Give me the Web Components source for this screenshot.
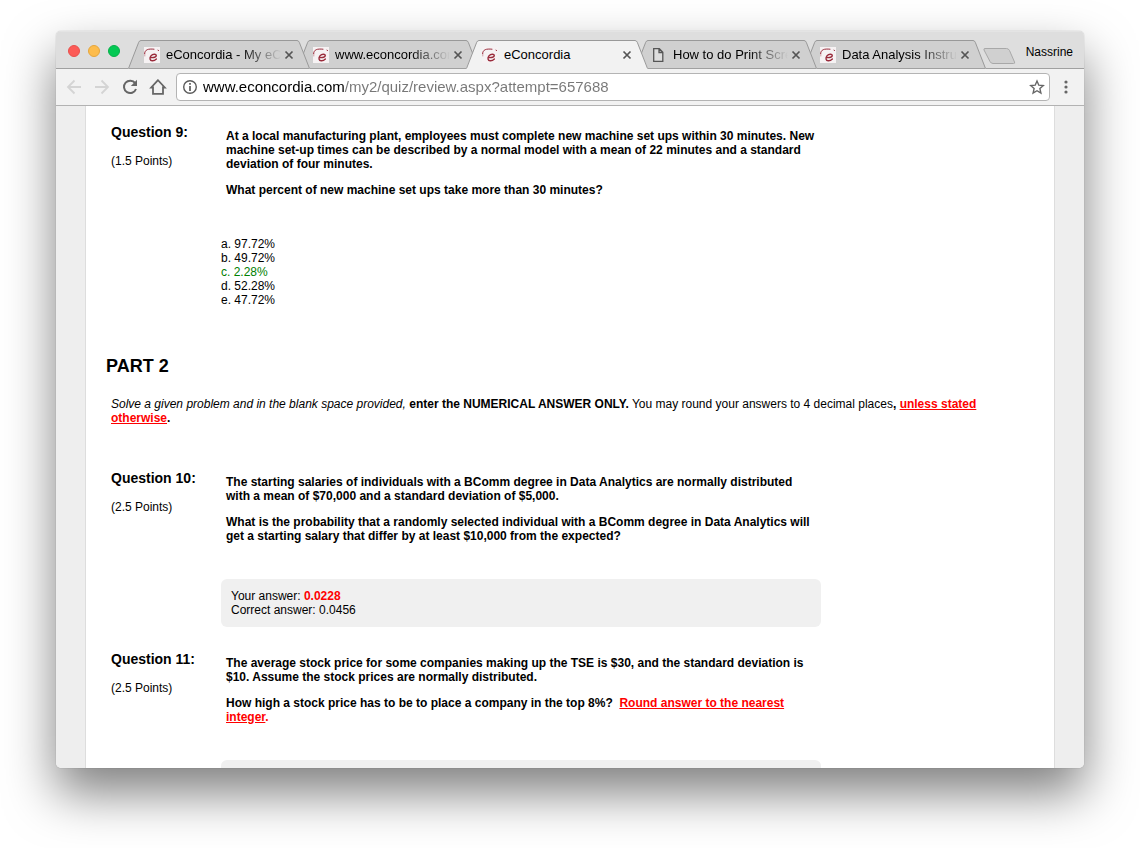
<!DOCTYPE html>
<html lang="en">
<head>
<meta charset="utf-8">
<title>eConcordia</title>
<style>
html, body { height: 100%; margin: 0; }
body { background: #fff; color: #000; font: 12px/14px "Liberation Sans", Arial, sans-serif; }
em { font-style: italic; }
.key { color: #f00; font-weight: bold; }
</style>
</head>
<body>
<browser-window>
  <tab-strip slot="tabs">
    <browser-tab label="eConcordia - My eConcordia" style="z-index:5"></browser-tab>
    <browser-tab label="www.econcordia.com" style="z-index:4"></browser-tab>
    <browser-tab label="eConcordia" active style="z-index:6"></browser-tab>
    <browser-tab label="How to do Print Screen" icon="file" style="z-index:2"></browser-tab>
    <browser-tab label="Data Analysis Instructions" style="z-index:1"></browser-tab>
  </tab-strip>
  <tool-bar slot="tools"></tool-bar>
  <quiz-page>
    <quiz-question name="Question 9:" points="(1.5 Points)">
      <quiz-text>At a local manufacturing plant, employees must complete new machine set ups within 30 minutes. New machine set-up times can be described by a normal model with a mean of 22 minutes and a standard deviation of four minutes.</quiz-text>
      <quiz-text>What percent of new machine set ups take more than 30 minutes?</quiz-text>
      <choice-list slot="answer" correct="2" options="a. 97.72%|b. 49.72%|c. 2.28%|d. 52.28%|e. 47.72%"></choice-list>
    </quiz-question>
    <quiz-part name="PART 2"><em>Solve a given problem and in the blank space provided,</em> <b>enter the NUMERICAL ANSWER ONLY.</b> You may round your answers to 4 decimal places<b>, <u class="key">unless stated otherwise</u>.</b></quiz-part>
    <quiz-question name="Question 10:" points="(2.5 Points)">
      <quiz-text>The starting salaries of individuals with a BComm degree in Data Analytics are normally distributed with a mean of $70,000 and a standard deviation of $5,000.</quiz-text>
      <quiz-text>What is the probability that a randomly selected individual with a BComm degree in Data Analytics will get a starting salary that differ by at least $10,000 from the expected?</quiz-text>
      <answer-box slot="answer"><div>Your answer: <span class="key">0.0228</span></div><div>Correct answer: 0.0456</div></answer-box>
    </quiz-question>
    <quiz-question name="Question 11:" points="(2.5 Points)">
      <quiz-text>The average stock price for some companies making up the TSE is $30, and the standard deviation is $10. Assume the stock prices are normally distributed.</quiz-text>
      <quiz-text>How high a stock price has to be to place a company in the top 8%?&nbsp; <span class="key"><u>Round answer to the nearest integer</u>.</span></quiz-text>
      <answer-box slot="answer"></answer-box>
    </quiz-question>
  </quiz-page>
</browser-window>

<script>
const define = (name, html, setup) => customElements.define(name, class extends HTMLElement {
  connectedCallback() {
    if (this.shadowRoot) return;
    const root = this.attachShadow({ mode: "open" });
    const t = document.createElement("template");
    t.innerHTML = html;
    root.append(t.content.cloneNode(true));
    if (setup) setup(this, root);
  }
});

define("browser-window", `
<style>
:host { display: block; box-sizing: border-box; height: 100vh; padding: 31px 56px 80px; overflow: hidden; }
.frame { display: flex; flex-direction: column; height: 100%; border-radius: 5px; overflow: hidden; background: #eee; }
.shadow { height: 100%; border-radius: 5px; box-shadow: 0 0 1px rgba(0,0,0,.4), 0 25px 50px rgba(0,0,0,.5); }
main { flex: 1; min-height: 0; overflow: hidden; }
</style>
<div class="shadow"><div class="frame">
  <slot name="tabs"></slot>
  <slot name="tools"></slot>
  <main><slot></slot></main>
</div></div>`);

define("tab-strip", `
<style>
:host { display: flex; flex: none; height: 38px; box-sizing: border-box; padding: 9px 11px 0 12px; background: #dedede; box-shadow: inset 0 -1px #a0a0a0, inset 0 1px #e4e4e4; }
.lights { display: flex; gap: 8px; padding-top: 5px; width: 60px; flex: none; }
.lights button { width: 12px; height: 12px; border-radius: 50%; border: 1px solid; padding: 0; box-sizing: border-box; }
.r { background: #fc5b57; border-color: #e8504c !important; }
.y { background: #fdbc4c; border-color: #e5a63c !important; }
.g { background: #04c954; border-color: #07b04a !important; }
nav { display: flex; flex: 0 1 845px; min-width: 0; }
.new { flex: none; width: 35px; height: 17px; margin: 8px 0 0 9px; padding: 0; border: 0; background: none; }
.who { margin-left: auto; padding: 5px 0 0; border: 0; background: none; font: 12px/14px "Liberation Sans", Arial, sans-serif; align-self: flex-start; color: #000; }
svg { display: block; }
</style>
<div class="lights"><button class="r" aria-label="Close window"></button><button class="y" aria-label="Minimise"></button><button class="g" aria-label="Full screen"></button></div>
<nav><slot></slot></nav>
<button class="new" aria-label="New tab"><svg width="35" height="17"><path d="M3 .5h21.500q2 0 3 2l5 11.500q.8 1.500-1 1.500H11q-2 0-3-2L2 2Q1.500.5 3 .5z" fill="#d0d0d0" stroke="#a8a8a8"/></svg></button>
<button class="who">Nassrine</button>`);

const favicon = `<svg class="ico" width="16" height="16" viewBox="0 0 16 16"><path fill="#f6f2f3" d="M0 0h16v16H0z"/><g fill="none" stroke="#9a2c3c" stroke-linecap="round"><path d="M.6 6.500C1 2.500 4 1.600 10 2.200" stroke-width="1"/><path d="M14 3.200l.6.300" stroke-width="1"/><path d="M.8 6v3" stroke-width=".7" opacity=".6"/><path d="M6.300 10.600c3.400.3 6.100-.5 6-2.100-.1-1.700-3.500-1.700-5.200.3-1.900 2.200-1.300 4.900 1.100 5 1.500.1 3-.6 4.200-1.800" stroke-width="1.400"/></g></svg>`;
const fileicon = `<svg class="ico" width="16" height="16" viewBox="0 0 16 16"><path d="M2.700 1.700h5.600l3.500 3.600v9H2.700zM8 1.700v3.800h3.800" fill="#f0f0f0" fill-opacity=".4" stroke="#555" stroke-width="1.300"/></svg>`;

define("browser-tab", `
<style>
:host { position: relative; display: block; flex: 1 1 182px; min-width: 0; height: 29px; margin-right: -13px; }
.bg { position: absolute; inset: 0; display: flex; }
.bg svg { flex: none; display: block; }
.bg i { flex: 1; background: var(--fill); box-shadow: inset 0 1px #999, inset 0 -1px var(--base); }
:host { --fill: #d0d0d0; --base: #a0a0a0; }
:host([active]) { --fill: #f2f2f2; --base: #f2f2f2; }
.row { position: relative; display: flex; align-items: center; height: 29px; padding: 0 13px 0 16px; }
a { flex: 1; min-width: 0; display: flex; align-items: center; gap: 6px; color: #000; text-decoration: none; font-size: 13px; line-height: 16px; }
span { flex: 1; min-width: 0; overflow: hidden; white-space: nowrap; }
:host(:not([active])) span { -webkit-mask-image: linear-gradient(to right, #000 calc(100% - 40px), transparent); mask-image: linear-gradient(to right, #000 calc(100% - 40px), transparent); }
.ico { flex: none; }
button { flex: none; width: 16px; height: 16px; padding: 0; border: 0; background: none; }
button svg { display: block; }
</style>
<div class="bg"><svg width="13" height="29"><path d="M0 29L11 2Q11.800 0 13 0V29z" fill="var(--fill)"/><path d="M.5 28.500L10.700 2.300Q11.500.5 13 .5" fill="none" stroke="#999"/><path d="M1 28.500H13" stroke="var(--base)"/></svg><i></i><svg width="13" height="29"><path d="M13 29L2 2Q1.200 0 0 0V29z" fill="var(--fill)"/><path d="M12.500 28.500L2.300 2.300Q1.500.5 0 .5" fill="none" stroke="#999"/><path d="M0 28.500H12" stroke="var(--base)"/></svg></div>
<div class="row"><a href="#"><span></span></a><button aria-label="Close tab"><svg width="16" height="16"><path d="M4.500 4.500l7 7m0-7l-7 7" stroke="#555" stroke-width="1.700"/></svg></button></div>`,
(el, root) => {
  root.querySelector("span").textContent = el.getAttribute("label");
  root.querySelector("a").insertAdjacentHTML("afterbegin", el.getAttribute("icon") === "file" ? fileicon : favicon);
});

define("tool-bar", `
<style>
:host { display: flex; flex: none; align-items: center; box-sizing: border-box; height: 37px; padding: 0 8px 1px 8px; background: #f2f2f2; box-shadow: inset 0 -1px #b2b2b2; }
button { flex: none; width: 20px; height: 20px; padding: 0; border: 0; background: none; }
svg { display: block; margin: auto; }
.nav { display: flex; gap: 8px; margin-right: 8px; }
.url { flex: 1; min-width: 0; display: flex; align-items: center; box-sizing: border-box; height: 28px; padding: 0 2px 0 3px; border: 1px solid #b4b4b4; border-radius: 4px; background: #fff; }
input { flex: 1; min-width: 0; height: 24px; margin: 0 0 0 3px; padding: 0; border: 0; outline: 0; font: 15px/24px "Liberation Sans", Arial, sans-serif; color: #777; background: linear-gradient(to right, #000 141px, #777 141px); -webkit-background-clip: text; background-clip: text; -webkit-text-fill-color: transparent; }
.more { margin-left: 6px; }
</style>
<div class="nav">
<button aria-label="Back"><svg width="20" height="20" fill="none" stroke="#d4d4d4" stroke-width="1.800"><path d="M17 10H4m6.500-6.500L4 10l6.500 6.500"/></svg></button>
<button aria-label="Forward"><svg width="20" height="20" fill="none" stroke="#d4d4d4" stroke-width="1.800"><path d="M3 10h13M9.500 3.500L16 10l-6.500 6.500"/></svg></button>
<button aria-label="Reload"><svg width="20" height="20"><path d="M15.200 6.200A6.200 6.200 0 1 0 16 12" fill="none" stroke="#666" stroke-width="2"/><path d="M17 2.800V9h-6.200z" fill="#666"/></svg></button>
<button aria-label="Home"><svg width="20" height="20"><path d="M10 3.200L3.200 10.500H5v6.300h10v-6.300h1.800z" fill="none" stroke="#666" stroke-width="1.800"/></svg></button>
</div>
<div class="url">
<button aria-label="Site information"><svg width="20" height="20"><circle cx="10" cy="10" r="6.300" fill="none" stroke="#5a5a5a" stroke-width="1.400"/><path d="M10 6v1.800M10 9v5" stroke="#5a5a5a" stroke-width="1.700"/></svg></button>
<input type="text" aria-label="Address" spellcheck="false" value="www.econcordia.com/my2/quiz/review.aspx?attempt=657688">
<button aria-label="Bookmark"><svg width="20" height="20"><path d="M10 4l1.800 4.200 4.500.4-3.400 3 1 4.400-3.900-2.300L6.100 16l1-4.400-3.400-3 4.500-.4z" fill="none" stroke="#666" stroke-width="1.400"/></svg></button>
</div>
<button class="more" aria-label="Menu"><svg width="20" height="20" fill="#666"><circle cx="10" cy="5" r="1.600"/><circle cx="10" cy="10" r="1.600"/><circle cx="10" cy="15" r="1.600"/></svg></button>`);

define("quiz-page", `
<style>
:host { display: block; box-sizing: border-box; max-width: 970px; min-height: 100%; margin: 0 auto; padding: 18px 25px 0; background: #fff; border: solid #ddd; border-width: 0 1px; }
</style><slot></slot>`);

define("quiz-question", `
<style>
:host { display: grid; grid-template-columns: 110px minmax(0, 600px); margin-bottom: 24px; }
h3 { margin: 0 0 14px; font-size: 14px; line-height: 16px; }
p { margin: 0; }
.ask { display: grid; gap: 12px; padding: 5px 5px 36px; }
</style>
<div><h3></h3><p></p></div>
<div><div class="ask"><slot></slot></div><slot name="answer"></slot></div>`,
(el, root) => {
  root.querySelector("h3").textContent = el.getAttribute("name");
  root.querySelector("p").textContent = el.getAttribute("points");
});

define("quiz-text", `<style>:host { display: block; font-weight: bold; }</style><slot></slot>`);

define("choice-list", `
<style>
:host { display: block; padding: 4px 0 24px; }
ul { margin: 0; padding: 0; list-style: none; }
.ok { color: green; }
</style><ul></ul>`,
(el, root) => el.getAttribute("options").split("|").forEach((text, i) => {
  const li = document.createElement("li");
  li.textContent = text;
  if (i === +el.getAttribute("correct")) li.className = "ok";
  root.querySelector("ul").append(li);
}));

define("quiz-part", `
<style>
:host { display: block; margin-bottom: 45px; }
h2 { margin: 0 0 20px -5px; font-size: 18px; line-height: 22px; }
p { margin: 0; }
</style><h2></h2><p><slot></slot></p>`,
(el, root) => { root.querySelector("h2").textContent = el.getAttribute("name"); });

define("answer-box", `
<style>:host { display: block; box-sizing: border-box; min-height: 48px; padding: 10px; border-radius: 6px; background: #f0f0f0; }</style><slot></slot>`);
</script>
</body>
</html>
